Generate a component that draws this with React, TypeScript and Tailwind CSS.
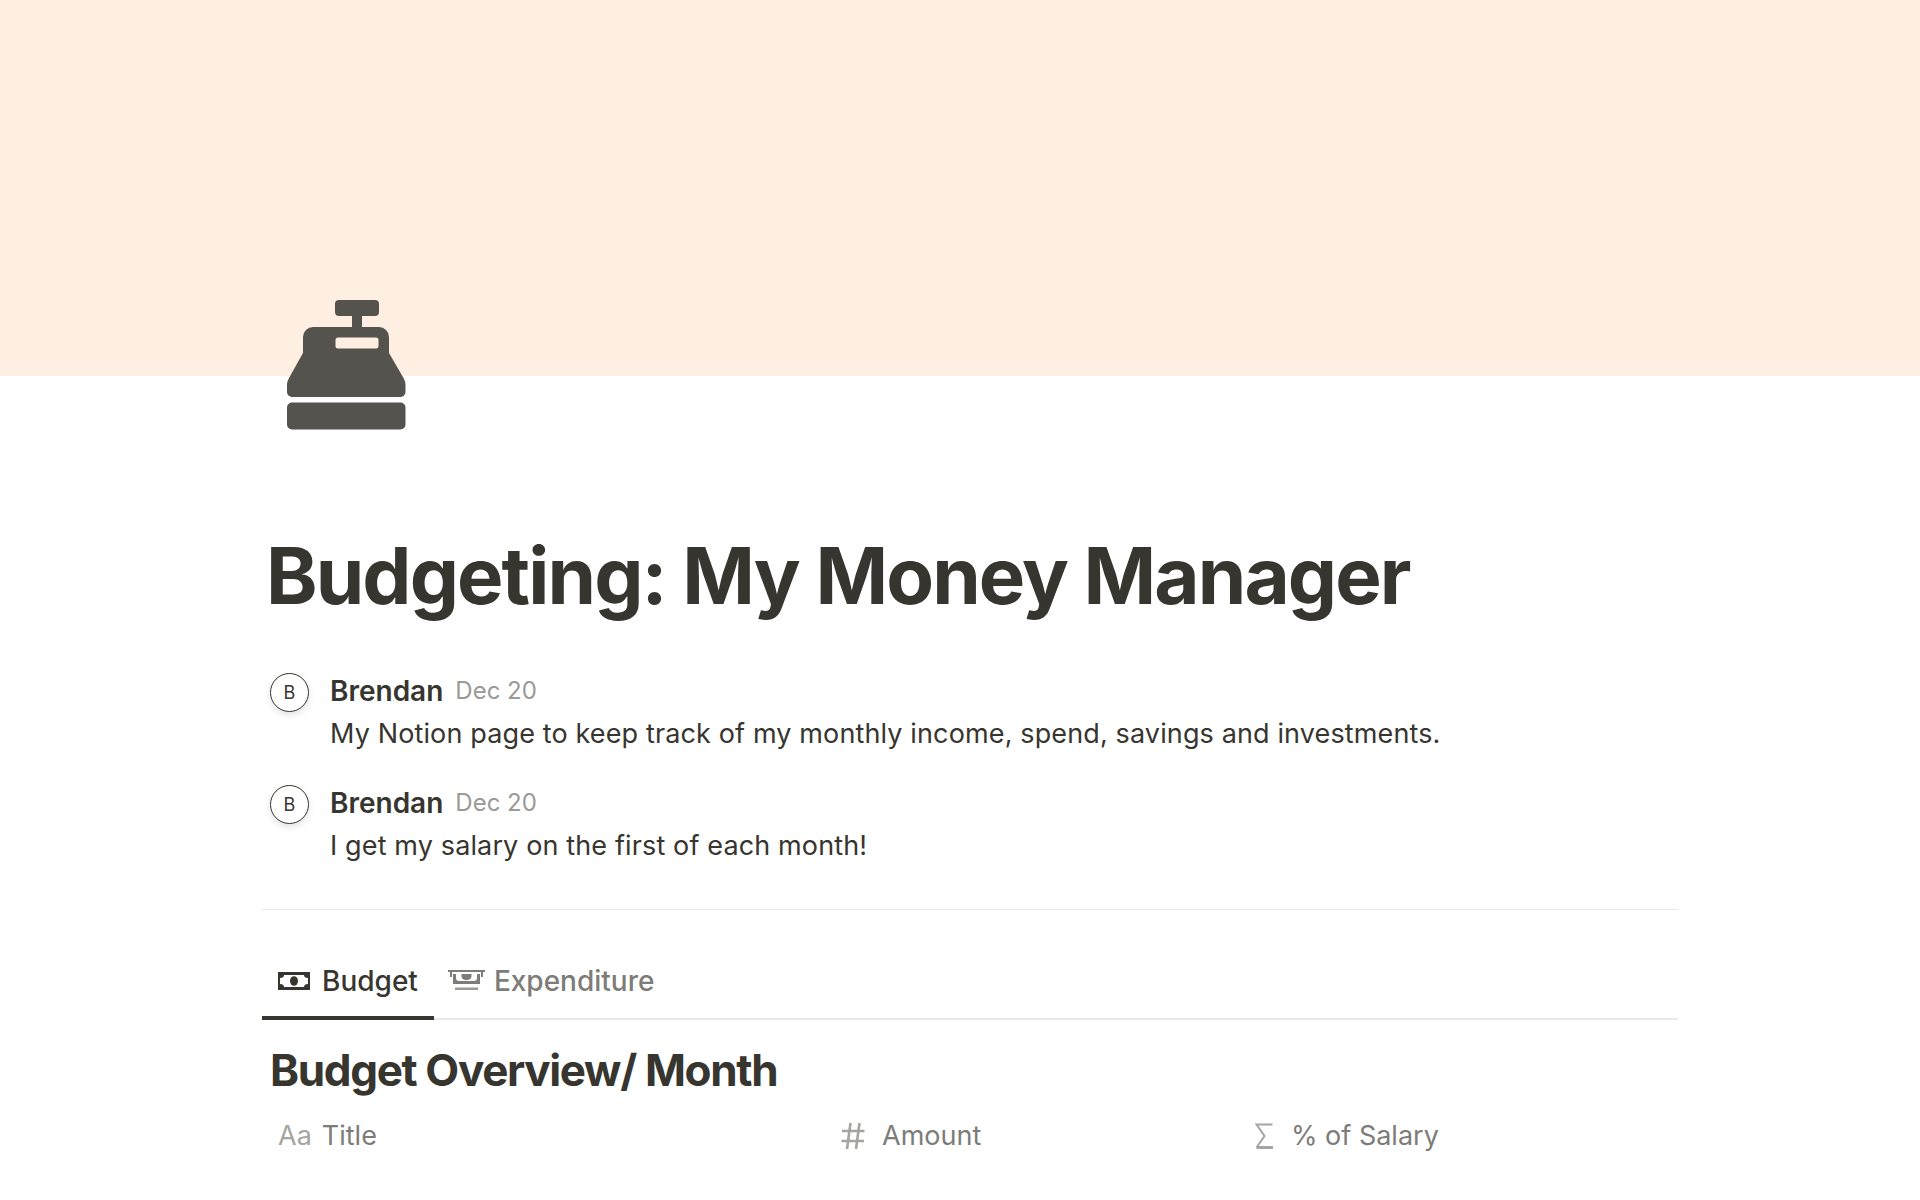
const font = { fontFamily: "Inter, 'Liberation Sans', sans-serif" };

function RegisterIcon() {
  return (
    <svg width="119" height="130" viewBox="0 0 119 130" className="block">
      <path
        fillRule="evenodd"
        fill="#55534E"
        d="M52 0H88A4 4 0 0 1 92 4V12A4 4 0 0 1 88 16H75V27H92A10 10 0 0 1 102 37V53L116.500 78Q118.500 81.500 118.500 85V92A5 5 0 0 1 113.500 97H5A5 5 0 0 1 0 92V85Q0 81.500 2 78L16 53V37A10 10 0 0 1 26 27H65V16H52A4 4 0 0 1 48 12V4A4 4 0 0 1 52 0ZM51 37.500A2.500 2.500 0 0 0 48.500 40V46A2.500 2.500 0 0 0 51 48.500H89A2.500 2.500 0 0 0 91.500 46V40A2.500 2.500 0 0 0 89 37.500Z"
      />
      <rect x="0" y="102.500" width="118.500" height="27" rx="5" fill="#55534E" />
    </svg>
  );
}

function BudgetIcon() {
  return (
    <svg width="32" height="18" viewBox="0 0 32 18" className="block">
      <rect width="32" height="18" fill="#37352F" />
      <path fill="#FFFFFF" d="M6 3H26Q26 6 30 6V12Q26 12 26 15H6Q6 12 2 12V6Q6 6 6 3Z" />
      <ellipse cx="16" cy="9" rx="4" ry="4.800" fill="#37352F" />
    </svg>
  );
}

function ExpenditureIcon() {
  return (
    <svg width="37" height="21" viewBox="0 0 37 21" className="block">
      <path fill="#7D7C78" d="M0 0H37V2H35V7H33V2H4V7H2V2H0Z" />
      <path fill="#7D7C78" fillRule="evenodd" d="M5 4H32V14H5ZM8 4V8Q8 11 11 11H26Q29 11 29 8V4Z" />
      <path fill="#7D7C78" d="M13.500 4H23.500V6Q23.500 10 18.500 10Q13.500 10 13.500 6Z" />
      <rect x="7" y="17.500" width="23" height="2.500" fill="#9B9A97" />
    </svg>
  );
}

function HashIcon() {
  return (
    <svg width="24" height="28" viewBox="0 0 24 28" className="block">
      <path
        fill="none"
        stroke="#A5A4A1"
        strokeWidth="2.600"
        d="M9.500 1L6 27M18.500 1L15 27M1 9H23.500M0.500 19H23"
      />
    </svg>
  );
}

function SigmaIcon() {
  return (
    <svg width="18" height="26" viewBox="0 0 18 26" className="block">
      <path
        fill="none"
        stroke="#A5A4A1"
        strokeWidth="2"
        d="M17.500 1.500H1.500L9.500 13L1.500 24.500"
      />
      <path fill="none" stroke="#A5A4A1" strokeWidth="3" d="M1.500 24.500H18" />
    </svg>
  );
}

function Comment({ text }: { text: string }) {
  return (
    <div className="flex h-[72px] pl-2">
      <div className="flex h-[39px] w-[39px] shrink-0 items-center justify-center rounded-full border-[1.5px] border-[#37352F] bg-white text-[18px] text-[#37352F] shadow-[0_3px_6px_rgba(15,15,15,0.12)]">
        B
      </div>
      <div className="ml-[21px]">
        <div className="flex h-[36px] items-center">
          <span className="text-[28px] font-semibold text-[#37352F]">Brendan</span>
          <span className="ml-3 text-[24px] text-[#9B9A97]">Dec 20</span>
        </div>
        <div className="mt-[7px] text-[27px] leading-[36px] tracking-[0.13px] text-[#37352F]">{text}</div>
      </div>
    </div>
  );
}

export default function App() {
  return (
    <div className="h-[1200px] overflow-hidden bg-white" style={font}>
      <div className="h-[376px] bg-[#FFEFE2]" />
      <div className="ml-[262px] w-[1416px]">
        <div className="-mt-[76px] pl-[25px]">
          <RegisterIcon />
        </div>

        <h1 className="mt-[104px] pl-1 text-[78px] leading-[84px] font-bold tracking-[-1.9px] text-[#37352F]">
          Budgeting: My Money Manager
        </h1>

        <div className="mt-[55px] flex flex-col gap-[40px]">
          <Comment text="My Notion page to keep track of my monthly income, spend, savings and investments." />
          <Comment text="I get my salary on the first of each month!" />
        </div>

        <div className="mt-[52px] h-px bg-[#E9E9E7]" />

        <div className="mt-[36px] flex h-[74px] border-b-2 border-[#E9E9E7]">
          <div className="-mb-[2px] flex items-center gap-3 border-b-4 border-[#37352F] px-4 pb-px text-[28px] font-medium text-[#37352F]">
            <BudgetIcon />
            <span>Budget</span>
          </div>
          <div className="ml-[14px] flex items-center gap-[9px] pb-[3px] text-[28px] font-medium text-[#7D7C78]">
            <ExpenditureIcon />
            <span>Expenditure</span>
          </div>
        </div>

        <h2 className="mt-[24px] pl-2 text-[44px] leading-[52px] font-bold tracking-[-1.35px] text-[#37352F]">
          Budget Overview/ Month
        </h2>

        <div className="mt-[15px] flex h-[50px] items-center text-[27px] text-[#7D7C78]">
          <div className="flex w-[579px] items-center pl-4">
            <span className="text-[#A5A4A1]">Aa</span>
            <span className="ml-[10px]">Title</span>
          </div>
          <div className="flex w-[412px] items-center">
            <span className="w-[41px]">
              <HashIcon />
            </span>
            <span>Amount</span>
          </div>
          <div className="flex items-center">
            <span className="ml-[2px] w-[36px]">
              <SigmaIcon />
            </span>
            <span>% of Salary</span>
          </div>
        </div>
      </div>
    </div>
  );
}
